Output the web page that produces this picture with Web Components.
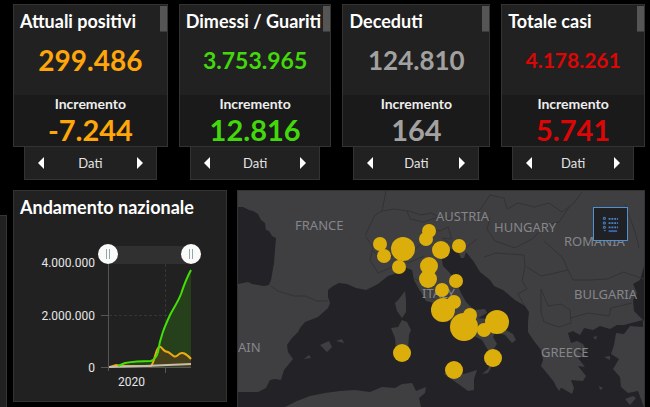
<!DOCTYPE html>
<html lang="it">
<head>
<meta charset="utf-8">
<title>Andamento nazionale</title>
<style>
html, body { margin: 0; background: #000; }
body { font-family: Lato, "Liberation Sans", sans-serif; color: #fff; }
</style>
</head>
<body>
<covid-dashboard>
  <stat-card heading="Attuali positivi" total="299.486" delta="-7.244" style="--tone:#ffa60a;--size:28px"></stat-card>
  <stat-card heading="Dimessi / Guariti" total="3.753.965" delta="12.816" style="--tone:#43d80b;--size:23px"></stat-card>
  <stat-card heading="Deceduti" total="124.810" delta="164" style="--tone:#a3a1a0;--size:26px"></stat-card>
  <stat-card heading="Totale casi" total="4.178.261" delta="5.741" style="--tone:#dc0606;--size:21px"></stat-card>
  <trend-panel slot="trend">Andamento nazionale</trend-panel>
  <region-map slot="map"></region-map>
</covid-dashboard>

<script>
class Base extends HTMLElement {
  connectedCallback() {
    if (this.shadowRoot) return;
    this.attachShadow({ mode: 'open' }).innerHTML = this.render();
  }
}

customElements.define('covid-dashboard', class extends Base {
  render() {
    return `<style>
      :host { display: grid; grid-template-columns: 7px minmax(0, 1fr); gap: 6px; min-height: 100vh; box-sizing: border-box; padding: 4px 5px 0 0; }
      aside { margin-top: 211px; background: #212121; border: 1px solid #353535; border-width: 1px 1px 0 0; }
      main { display: flex; flex-direction: column; gap: 10px; }
      .stats { display: grid; grid-template-columns: 155fr 153fr 148fr 144fr; gap: 11px; }
      .lower { flex: 1; display: grid; grid-template-columns: 214fr 408fr; gap: 10px; }
    </style>
    <aside></aside>
    <main>
      <div class="stats"><slot></slot></div>
      <div class="lower"><slot name="trend"></slot><slot name="map"></slot></div>
    </main>`;
  }
});

customElements.define('pager-bar', class extends Base {
  render() {
    return `<style>
      :host { display: flex; justify-content: space-between; align-items: center; height: 32px; margin: 0 11px; padding: 0 8px; background: #212121; border: 1px solid #333; border-top: 0; font-size: 13px; color: #e4e4e4; }
      button { display: flex; padding: 4px; border: 0; background: none; color: #fff; }
      svg { width: 8px; height: 12px; fill: currentColor; }
    </style>
    <button aria-label="Precedente"><svg viewBox="0 0 8 12"><path d="M7 0V12L1 6Z"/></svg></button>
    <slot></slot>
    <button aria-label="Successivo"><svg viewBox="0 0 8 12"><path d="M1 0V12L7 6Z"/></svg></button>`;
  }
});

customElements.define('stat-card', class extends Base {
  render() {
    const a = n => this.getAttribute(n);
    return `<style>
      :host { display: block; min-width: 0; }
      section { position: relative; border: 1px solid #333; background: #212121; }
      section::after { content: ""; position: absolute; top: 1px; right: 0; width: 7px; height: 26px; background: #555; border-bottom: 1px solid #3c3c3c; box-sizing: border-box; }
      h2 { margin: 0; padding: 5px 0 0 6px; font-size: 18px; line-height: 22px; font-weight: 700; white-space: nowrap; }
      .top { height: 90px; }
      .num { color: var(--tone); font-weight: 700; text-align: center; }
      .total { font-size: var(--size); line-height: 32px; padding-top: 12px; }
      .low { background: #1a1a1a; height: 51px; text-align: center; }
      h3 { margin: 0; font-size: 14px; line-height: 18px; font-weight: 700; color: #eee; }
      .delta { font-size: 29px; line-height: 34px; }
    </style>
    <section>
      <div class="top"><h2>${a('heading')}</h2><div class="num total">${a('total')}</div></div>
      <div class="low"><h3>Incremento</h3><div class="num delta">${a('delta')}</div></div>
    </section>
    <pager-bar>Dati</pager-bar>`;
  }
});

customElements.define('range-brush', class extends Base {
  render() {
    return `<style>
      :host { display: grid; position: relative; height: 20px; }
      .track { height: 18px; margin: 2px 10px 0; background: #303030; }
      input { position: absolute; inset: 0; width: 100%; height: 20px; margin: 0; appearance: none; background: none; pointer-events: none; }
      input::-webkit-slider-thumb { appearance: none; pointer-events: auto; width: 20px; height: 20px; border-radius: 50%; background: linear-gradient(90deg, transparent 8px, #91a6ad 8px 9px, transparent 9px 11px, #91a6ad 11px 12px, transparent 12px) center / 20px 10px no-repeat, #fafaf8; }
    </style>
    <div class="track"></div>
    <input type="range" aria-label="Inizio" min="0" max="100" value="0">
    <input type="range" aria-label="Fine" min="0" max="100" value="100">`;
  }
});

customElements.define('trend-panel', class extends Base {
  render() {
    return `<style>
      :host { display: block; margin-bottom: 5px; background: #212121; border: 1px solid #333; box-sizing: border-box; }
      h2 { margin: 0; padding: 5px 6px 0; font-size: 18px; line-height: 22px; font-weight: 700; white-space: nowrap; }
      .chart { display: grid; grid-template-columns: 57px minmax(0, 1fr); column-gap: 3px; padding: 26px 25px 0 24px; font: 12px/16px Roboto, sans-serif; color: #e6e6e6; }
      .labels { display: flex; flex-direction: column; justify-content: space-between; height: 121px; padding-top: 11px; text-align: right; }
      svg { display: block; width: 100%; height: 110px; }
      path { fill: none; vector-effect: non-scaling-stroke; }
      .year { padding-left: 20px; }
    </style>
    <h2><slot></slot></h2>
    <div class="chart">
      <div class="labels"><span>4.000.000</span><span>2.000.000</span><span>0</span></div>
      <div>
        <range-brush></range-brush>
        <svg viewBox="98 264 103 110" preserveAspectRatio="none">
          <path d="M108.500 264V371M101 315.500H108M101 367.500H191M165.500 367V373" stroke="#555"/>
          <path d="M109 315.500H191M165.500 264V367" stroke="#353535" stroke-dasharray="3 2"/>
          <path style="fill:#25401a" d="M114 367L122 364Q136 361 151 360Q156 358 158 350C160 337 165 326 170 315C174 307 178 302 181 294C184 285 186 279 191 270V367Z"/>
          <path style="fill:#46401a" d="M151 366L157 350L160 346L167 352L175 356L182 352L191 359V367Z"/>
          <path d="M110 367L116 365L121 366H151C155 362 155 350 159 347C162 345 162 352 168 352C172 354 174 359 178 355C181 351 186 353 191 359" stroke="#edaa13" stroke-width="2"/>
          <path d="M109 367L145 366L191 364" stroke="#c6bdad" stroke-width="2"/>
          <path d="M118 366L125 363Q136 361 151 361Q156 359 158 352C160 337 165 326 170 315C174 307 178 302 181 294C184 285 186 279 191 270" stroke="#43e008" stroke-width="2"/>
        </svg>
        <div class="year">2020</div>
      </div>
    </div>`;
  }
});

customElements.define('region-map', class extends Base {
  render() {
    const dots = [[380,244,7],[384,256,7],[403,249,12],[399,267,7],[429,231,7],[426,239,7],[441,250,9],[459,246,7],[429,266,9],[428,279,9],[442,290,7],[456,281,7],[443,310,12],[454,302,7],[464,327,14],[470,315,7],[484,330,7],[497,322,12],[402,353,9],[493,358,9],[454,370,9]];
    return `<style>
      :host { display: block; position: relative; border: 1px solid #333; border-bottom: 0; overflow: hidden; background: #3f3f41; min-width: 0; }
      .map { position: absolute; inset: 0; width: 100%; height: 100%; display: block; }
      .sea { fill: #232327; }
      .land { fill: #3f3f41; }
      .line { fill: none; stroke: #333335; stroke-width: 1; stroke-linejoin: round; }
      text { font: 13px "Noto Sans", sans-serif; fill: #85868a; }
      .dots { fill: #dcae0c; }
      button { position: absolute; top: 16px; right: 16px; width: 35px; height: 34px; padding: 0; border: 1px solid #4e91d4; background: #202125; display: grid; place-items: center; }
      button svg { width: 17px; height: 17px; }
    </style>
    <svg class="map" viewBox="238 191 406 216" preserveAspectRatio="xMidYMin slice" role="img" aria-label="Mappa dei casi per regione">
      <path class="sea" d="M238 207L243 207L249 210L253 211L258 214L261 220L265 223L266 230L269 231L272 236L276 238L275 250L274 263L271 280L269 285L264 286L258 285L252 284L248 282L238 284Z"/>
      <path class="sea" d="M238 392L258 392L266 388L270 380L275 379L281 380L284 370L293 359L288 352L287 345L292 338L298 332L300 328L305 322L318 317L328 308L330 303L328 297L328 290L333 286L339 283L347 284L356 288L366 290L378 284L388 276L394 274L398 272L404 267L412 270L414 280L420 291L440 280L441 254L447 248L457 250L461 258L464 258L466 252L474 262L480 272L490 280L494 286L503 290L515 300L525 306L529 312L528 322L528 332L534 341L541 350L543 360L541 366L550 377L554 382L557 388L562 388L572 394L574 388L571 380L583 381L586 376L578 366L585 367L578 358L586 356L577 350L587 352L583 344L577 341L571 343L568 333L573 331L580 335L584 328L593 330L600 326L610 329L617 325L624 325L643 320V327L630 326L624 334L616 333L614 345L611 354L619 359L613 369L620 377L621 387L628 393L638 391L644 407H238Z"/>
      <path class="sea" d="M644 266L640 280L633 284L637 293L633 300L634 311L644 321Z"/>
      <path class="land" d="M407 262L413 271L414 280L420 290L426 301L434 303L440 312L450 321L458 331L472 335L482 340L488 350L492 358L488 369L482 374L488 373L497 358L493 350L497 344L493 337L495 332L505 335L512 343L516 340L513 334L502 328L487 319L478 318L487 313L485 309L474 310L466 302L461 293L456 281L449 272L443 266L441 254L447 247L432 244Z"/>
      <path class="land" d="M405 291L399 299L395 303L397 311L402 318L406 312V300Z M402 320L398 327L391 328L395 338L396 350L400 355L408 351L409 335L411 330L407 322Z M444 374L449 371L464 374L477 370L474 379L474 390L468 391L457 383Z M320 345L329 341L332 347L327 352Z M336 341L342 339L344 343Z M304 359L309 355L311 358Z"/>
      <path class="land" d="M285 407L297 401L310 396L325 393L340 391L355 390L370 392L382 387L395 388L402 384L412 383L416 391L426 387L425 393L419 398L421 407Z"/>
      <path class="land" d="M547 363L559 359L571 367L583 373L575 377L566 371L558 372L551 370ZM553 373L566 373L572 383L570 392L563 384L559 391L554 382Z M625 399L633 396L636 398L630 405Z M604 357L610 356L610 360Z M593 337L597 336L596 340Z M599 386L603 388L600 390Z"/>
      <path class="line" d="M271 286L278 291L294 296L305 296L317 301L328 301M365 236L371 223L375 215L382 211L386 191M382 211L394 209L409 211L421 215L431 213L443 219L463 217L480 210L490 195L504 198L507 209L518 203L534 207L549 203L562 212L574 203L582 192M407 211L410 219L424 222L438 217M366 237L373 247L370 260L378 273L395 266L407 256L421 244L430 228L440 231L448 227L452 239L442 238L453 245M372 250L384 262L397 253L408 263L424 256M490 218L487 229L495 241L515 248L532 239L546 225L559 222L570 206M484 257L496 253L524 255L525 266L522 281L527 289L518 294L524 305M527 267L541 276L551 274L568 270L563 258L544 241M568 270L573 280L589 280L608 279L623 272L644 279M541 289L548 306L561 304L570 310L571 323L559 327L544 322L541 312ZM571 318L588 313L609 316L611 308L632 303M625 204L636 235L639 248M457 250L466 248L477 239M414 278L424 285L435 301L447 310L461 318L474 332"/>
      <text x="295" y="230">FRANCE</text><text x="436" y="221">AUSTRIA</text><text x="494" y="232">HUNGARY</text>
      <text x="564" y="246">ROMANIA</text><text x="574" y="299">BULGARIA</text><text x="541" y="357">GREECE</text>
      <text x="238" y="352">AIN</text><text x="422" y="298">ITALY</text>
      <g class="dots">${dots.map(([x, y, r]) => `<circle cx="${x}" cy="${y}" r="${r}"/>`).join('')}</g>
    </svg>
    <button aria-label="Legenda"><svg viewBox="0 0 18 18" fill="none" stroke="#4b86cc"><path d="M7 3H17M7 7.500H17M7 12H17" stroke-width="2" stroke-dasharray="2 1"/><path d="M7 16H16" stroke-width="2" stroke="#3765ab"/><path d="M1.500 1.500h2v2h-2zM1.500 6.500h2v2h-2zM1.500 11h2v2h-2zM2 15.500h2"/></svg></button>`;
  }
});
</script>
</body>
</html>
